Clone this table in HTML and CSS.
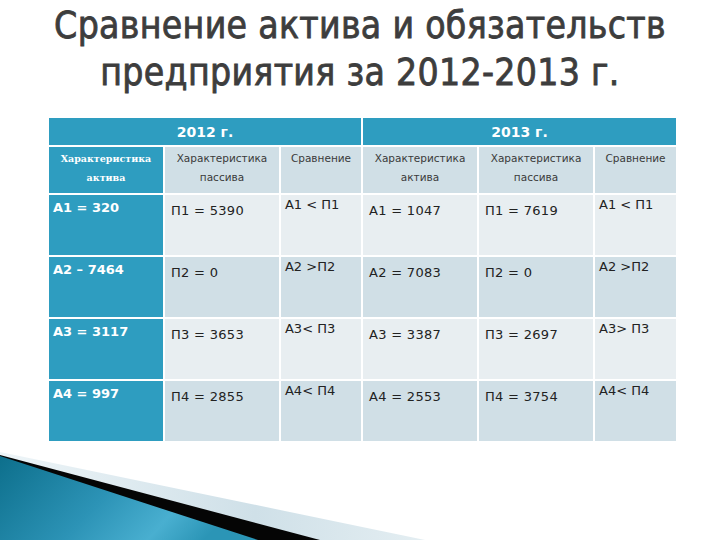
FILE: index.html
```html
<!DOCTYPE html>
<html lang="ru">
<head>
<meta charset="utf-8">
<title>Сравнение актива и обязательств</title>
<link rel="stylesheet" href="styles.css">
</head>
<body>
<div class="slide">
  <h1 class="title">Сравнение актива и обязательств<br>предприятия за 2012-2013 г.</h1>
  <table class="grid">
    <colgroup>
      <col class="c1"><col class="c2"><col class="c3"><col class="c4"><col class="c5"><col class="c6">
    </colgroup>
    <tr class="yr">
      <th colspan="3">2012 г.</th>
      <th colspan="3">2013 г.</th>
    </tr>
    <tr class="hd">
      <th class="first">Характеристика<br>актива</th>
      <th>Характеристика<br>пассива</th>
      <th>Сравнение</th>
      <th>Характеристика<br>актива</th>
      <th>Характеристика<br>пассива</th>
      <th>Сравнение</th>
    </tr>
    <tr class="odd">
      <td class="first">А1 = 320</td><td>П1 = 5390</td><td class="cmp">А1 &lt; П1</td>
      <td>А1 = 1047</td><td>П1 = 7619</td><td class="cmp">А1 &lt; П1</td>
    </tr>
    <tr class="even">
      <td class="first">А2 – 7464</td><td>П2 = 0</td><td class="cmp">А2 &gt;П2</td>
      <td>А2 = 7083</td><td>П2 = 0</td><td class="cmp">А2 &gt;П2</td>
    </tr>
    <tr class="odd">
      <td class="first">А3 = 3117</td><td>П3 = 3653</td><td class="cmp">А3&lt; П3</td>
      <td>А3 = 3387</td><td>П3 = 2697</td><td class="cmp">А3&gt; П3</td>
    </tr>
    <tr class="even">
      <td class="first">А4 = 997</td><td>П4 = 2855</td><td class="cmp">А4&lt; П4</td>
      <td>А4 = 2553</td><td>П4 = 3754</td><td class="cmp">А4&lt; П4</td>
    </tr>
  </table>
  <svg class="swoosh" width="430" height="90" viewBox="0 450 430 90" aria-hidden="true">
    <defs>
      <linearGradient id="lite" x1="0" y1="0" x2="1" y2="0">
        <stop offset="0" stop-color="#eef5f8"/>
        <stop offset="0.6" stop-color="#cfe0e8"/>
        <stop offset="1" stop-color="#e4eef2"/>
      </linearGradient>
      <linearGradient id="teal" x1="0" y1="0" x2="1" y2="0.3">
        <stop offset="0" stop-color="#0d6f8c"/>
        <stop offset="0.5" stop-color="#2c93b6"/>
        <stop offset="0.8" stop-color="#49afd0"/>
        <stop offset="1" stop-color="#2b95b6"/>
      </linearGradient>
    </defs>
    <polygon points="0,452 425,540 0,540" fill="url(#lite)"/>
    <polygon points="0,455 320,540 0,540" fill="#050505"/>
    <polygon points="0,456 258,540 0,540" fill="url(#teal)"/>
  </svg>
</div>
</body>
</html>
```
FILE: styles.css
```css
html, body {
  margin: 0;
  padding: 0;
  background: #ffffff;
}
.slide {
  position: relative;
  width: 720px;
  height: 540px;
  overflow: hidden;
  display: flex;
  flex-direction: column;
  align-items: center;
}
.title {
  margin: 2px 0 0 0;
  font-family: "DejaVu Sans Condensed", "DejaVu Sans", sans-serif;
  font-weight: normal;
  font-size: 37px;
  line-height: 47px;
  color: #3d3d3d;
  text-align: center;
  letter-spacing: 0.3px;
  -webkit-text-stroke: 0.8px #3d3d3d;
}
.grid {
  margin-top: 20px;
  margin-left: 5px;
  border-collapse: collapse;
  table-layout: fixed;
  width: 629px;
  font-family: "DejaVu Sans", sans-serif;
}
.c1 { width: 116px; }
.c2 { width: 116px; }
.c3 { width: 82px; }
.c4 { width: 116px; }
.c5 { width: 116px; }
.c6 { width: 83px; }
.grid th, .grid td {
  border: 2px solid #ffffff;
  padding: 0;
}
.yr th {
  height: 27px;
  background: #2e9dc0;
  color: #ffffff;
  font-size: 14px;
  font-weight: bold;
  text-align: center;
}
.hd th {
  height: 44px;
  background: #d0dfe6;
  color: #3a3a3a;
  font-size: 10.5px;
  font-weight: normal;
  line-height: 19px;
  text-align: center;
  vertical-align: top;
  padding-top: 2px;
}
.hd th.first {
  background: #2e9dc0;
  color: #ffffff;
  font-family: "DejaVu Serif", serif;
  font-weight: bold;
  font-size: 9.5px;
}
.odd td, .even td {
  height: 52px;
  vertical-align: top;
  font-size: 13px;
  color: #222222;
  padding: 8px 0 0 6px;
  white-space: nowrap;
  letter-spacing: 0.3px;
}
.odd td { background: #e8eef1; }
.even td { background: #d0dfe6; }
.odd td.first, .even td.first {
  background: #2e9dc0;
  color: #ffffff;
  font-weight: bold;
  padding-top: 5px;
  padding-left: 4px;
  letter-spacing: 0;
}
.odd td.cmp, .even td.cmp {
  padding-top: 2px;
  padding-left: 4px;
  letter-spacing: 0;
}
.swoosh {
  position: absolute;
  left: 0;
  bottom: 0;
}
```
